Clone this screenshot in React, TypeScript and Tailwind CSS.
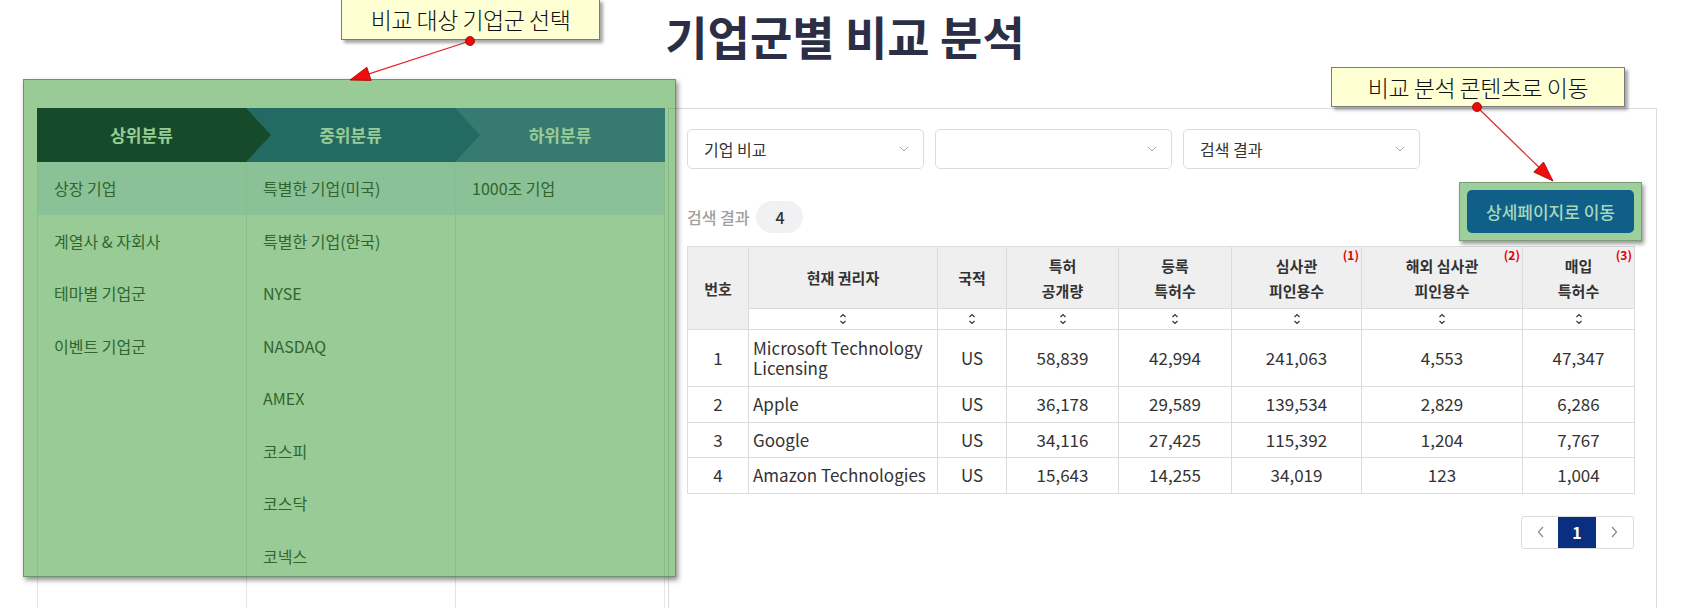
import React from "react";

// 기업군별 비교 분석 – category picker + comparison table, with annotation callouts

const topCats = ["상장 기업", "계열사 & 자회사", "테마별 기업군", "이벤트 기업군"];
const midCats = ["특별한 기업(미국)", "특별한 기업(한국)", "NYSE", "NASDAQ", "AMEX", "코스피", "코스닥", "코넥스"];
const subCats = ["1000조 기업"];

const rows = [
  { no: 1, owner: "Microsoft Technology Licensing", nat: "US", pub: "58,839", reg: "42,994", cite: "241,063", foreign: "4,553", buy: "47,347" },
  { no: 2, owner: "Apple", nat: "US", pub: "36,178", reg: "29,589", cite: "139,534", foreign: "2,829", buy: "6,286" },
  { no: 3, owner: "Google", nat: "US", pub: "34,116", reg: "27,425", cite: "115,392", foreign: "1,204", buy: "7,767" },
  { no: 4, owner: "Amazon Technologies", nat: "US", pub: "15,643", reg: "14,255", cite: "34,019", foreign: "123", buy: "1,004" },
];

function Chevron({ className = "" }: { className?: string }) {
  return (
    <svg width="10" height="6" viewBox="0 0 10 6" className={className}>
      <path d="M1 1 L5 5 L9 1" fill="none" stroke="#a3a3a3" strokeWidth="1" />
    </svg>
  );
}

function SortIcon() {
  return (
    <svg width="8" height="14" viewBox="0 0 8 14" className="mx-auto">
      <path d="M1.5 5 L4 2.5 L6.5 5" fill="none" stroke="#333" strokeWidth="1.2" />
      <path d="M1.5 9 L4 11.5 L6.5 9" fill="none" stroke="#333" strokeWidth="1.2" />
    </svg>
  );
}

function Arrow({ x1, y1, x2, y2 }: { x1: number; y1: number; x2: number; y2: number }) {
  const dx = x2 - x1;
  const dy = y2 - y1;
  const len = Math.hypot(dx, dy);
  const ux = dx / len;
  const uy = dy / len;
  const L = 20;
  const W = 7;
  const bx = x2 - ux * L;
  const by = y2 - uy * L;
  const pts = `${x2},${y2} ${bx - uy * W},${by + ux * W} ${bx + uy * W},${by - ux * W}`;
  return (
    <g>
      <line x1={x1} y1={y1} x2={bx} y2={by} stroke="#e3262b" strokeWidth="1.2" />
      <polygon points={pts} fill="#f20d0d" stroke="#a30000" strokeWidth="0.8" />
      <circle cx={x1} cy={y1} r="4.5" fill="#e80b0b" stroke="#950000" strokeWidth="0.8" />
    </g>
  );
}

function Select({ label }: { label: string }) {
  return (
    <div className="flex h-[40px] w-[237px] items-center justify-between rounded-[5px] border border-[#dcdcdc] pl-[16px] pr-[14px] text-[16px] text-[#333]">
      <span>{label}</span>
      <Chevron />
    </div>
  );
}

function Note({ n }: { n: number }) {
  return <span className="absolute right-[2px] top-[2px] text-[12px] font-bold leading-none text-[#e00000]">({n})</span>;
}

export default function App() {
  const th = "border border-[#dcdcdc] bg-[#efefef] text-[15px] font-bold leading-[25px] text-[#333]";
  const td = "border border-[#dcdcdc] text-center";

  return (
    <div className="relative h-[608px] w-[1690px] overflow-hidden bg-white font-['Noto_Sans_CJK_KR',sans-serif]">
      <h1 className="pt-[12px] text-center text-[46px] font-bold leading-none text-[#2b2e45]">기업군별 비교 분석</h1>

      <div className="mt-[50px] flex pl-[37px]">
        {/* category picker */}
        <div className="w-[628px]">
          <div className="grid h-[54px] grid-cols-[209px_209px_210px] text-[17px] font-bold text-white">
            <div className="relative z-[2] flex items-center justify-center bg-[#11163b]">
              상위분류
              <svg width="25" height="54" viewBox="0 0 25 54" className="absolute left-full top-0">
                <polygon points="0,0 25,27 0,54" fill="#11163b" />
              </svg>
            </div>
            <div className="relative z-[1] flex items-center justify-center bg-[#2a50a0]">
              중위분류
              <svg width="25" height="54" viewBox="0 0 25 54" className="absolute left-full top-0">
                <polygon points="0,0 25,27 0,54" fill="#2a50a0" />
              </svg>
            </div>
            <div className="flex items-center justify-center bg-[#4d6cbe]">하위분류</div>
          </div>
          <div className="grid h-[460px] grid-cols-[209px_209px_210px] text-[16px] text-[#444]">
            {[topCats, midCats, subCats].map((list, ci) => (
              <div key={ci} className={`border-l border-[#e5e5e5] ${ci === 2 ? "border-r" : ""}`}>
                {list.map((item, i) => (
                  <div key={item} className={`flex h-[52.5px] items-center pl-[16px] ${i === 0 ? "bg-[#e7edff]" : ""}`}>
                    {item}
                  </div>
                ))}
              </div>
            ))}
          </div>
        </div>

        {/* comparison result */}
        <div className="ml-[3px] h-[520px] w-[989px] border border-[#dcdcdc] pl-[18px] pr-[22px] pt-[20px]">
          <div className="flex gap-[11px]">
            <Select label="기업 비교" />
            <Select label="" />
            <Select label="검색 결과" />
          </div>

          <div className="mt-[13px] flex items-end justify-between">
            <div className="mb-[8px] flex items-center gap-[7px]">
              <span className="text-[16px] font-medium text-[#a0a0a0]">검색 결과</span>
              <span className="flex h-[32px] w-[47px] items-center justify-center rounded-full bg-[#f1f1f4] text-[16px] font-medium text-[#333]">4</span>
            </div>
            <div className="mr-[-8px] border border-[#7c9d7a] bg-[#9ccf9b] p-[7px] shadow-[2px_3px_4px_rgba(0,0,0,0.4)]">
              <button className="flex h-[43px] w-[167px] items-center justify-center rounded-[5px] bg-[#0f5f88] text-[17px] font-medium text-[#a8d7b8]">
                상세페이지로 이동
              </button>
            </div>
          </div>

          <table className="mt-[5px] w-[947px] table-fixed border-collapse text-[17px] leading-[20px] text-[#333]">
            <colgroup>
              <col className="w-[61px]" />
              <col className="w-[189px]" />
              <col className="w-[69px]" />
              <col className="w-[112px]" />
              <col className="w-[113px]" />
              <col className="w-[130px]" />
              <col className="w-[161px]" />
              <col className="w-[112px]" />
            </colgroup>
            <thead>
              <tr className="h-[62px]">
                <th rowSpan={2} className={th}>번호</th>
                <th className={th}>현재 권리자</th>
                <th className={th}>국적</th>
                <th className={th}>특허<br />공개량</th>
                <th className={th}>등록<br />특허수</th>
                <th className={`relative ${th}`}>심사관<br />피인용수<Note n={1} /></th>
                <th className={`relative ${th}`}>해외 심사관<br />피인용수<Note n={2} /></th>
                <th className={`relative ${th}`}>매입<br />특허수<Note n={3} /></th>
              </tr>
              <tr className="h-[21px]">
                {Array.from({ length: 7 }).map((_, i) => (
                  <th key={i} className="border border-[#dcdcdc] bg-white p-0">
                    <SortIcon />
                  </th>
                ))}
              </tr>
            </thead>
            <tbody>
              {rows.map((r) => (
                <tr key={r.no} className={r.no === 1 ? "h-[57px]" : "h-[35.5px]"}>
                  <td className={td}>{r.no}</td>
                  <td className="border border-[#dcdcdc] pl-[4px] text-left">{r.owner}</td>
                  <td className={td}>{r.nat}</td>
                  <td className={td}>{r.pub}</td>
                  <td className={td}>{r.reg}</td>
                  <td className={td}>{r.cite}</td>
                  <td className={td}>{r.foreign}</td>
                  <td className={td}>{r.buy}</td>
                </tr>
              ))}
            </tbody>
          </table>

          <div className="mt-[22px] flex justify-end">
            <div className="flex h-[33px] overflow-hidden rounded-[3px] border border-[#dcdcdc]">
              <div className="flex w-[36px] items-center justify-center">
                <svg width="7" height="12" viewBox="0 0 7 12">
                  <path d="M6 1 L1.5 6 L6 11" fill="none" stroke="#8a8a8a" strokeWidth="1.2" />
                </svg>
              </div>
              <div className="flex w-[38px] items-center justify-center bg-[#0b2f80] text-[16px] font-bold text-white">1</div>
              <div className="flex w-[37px] items-center justify-center">
                <svg width="7" height="12" viewBox="0 0 7 12">
                  <path d="M1 1 L5.5 6 L1 11" fill="none" stroke="#8a8a8a" strokeWidth="1.2" />
                </svg>
              </div>
            </div>
          </div>
        </div>
      </div>

      {/* annotation: green highlight over the category picker */}
      <div className="pointer-events-none absolute left-[23px] top-[79px] z-10 h-[498px] w-[653px] border border-[#6d946b] bg-[rgba(26,139,22,0.45)] shadow-[2px_3px_5px_rgba(0,0,0,0.45)]" />

      {/* callouts */}
      <div className="absolute left-[341px] top-[-1px] z-20 flex h-[41px] w-[259px] items-center justify-center border border-[#7a7a7a] bg-[#ffffd4] text-[23px] font-light tracking-[-0.5px] text-[#111] shadow-[3px_3px_3px_rgba(0,0,0,0.35)]">
        비교 대상 기업군 선택
      </div>
      <div className="absolute left-[1331px] top-[67px] z-20 flex h-[40px] w-[294px] items-center justify-center border border-[#7a7a7a] bg-[#ffffd4] text-[23px] font-light tracking-[-0.5px] text-[#111] shadow-[3px_3px_3px_rgba(0,0,0,0.35)]">
        비교 분석 콘텐츠로 이동
      </div>
      <svg className="pointer-events-none absolute inset-0 z-30" width="1690" height="608">
        <Arrow x1={470} y1={41} x2={350} y2={80} />
        <Arrow x1={1477} y1={107} x2={1553} y2={181} />
      </svg>
    </div>
  );
}
